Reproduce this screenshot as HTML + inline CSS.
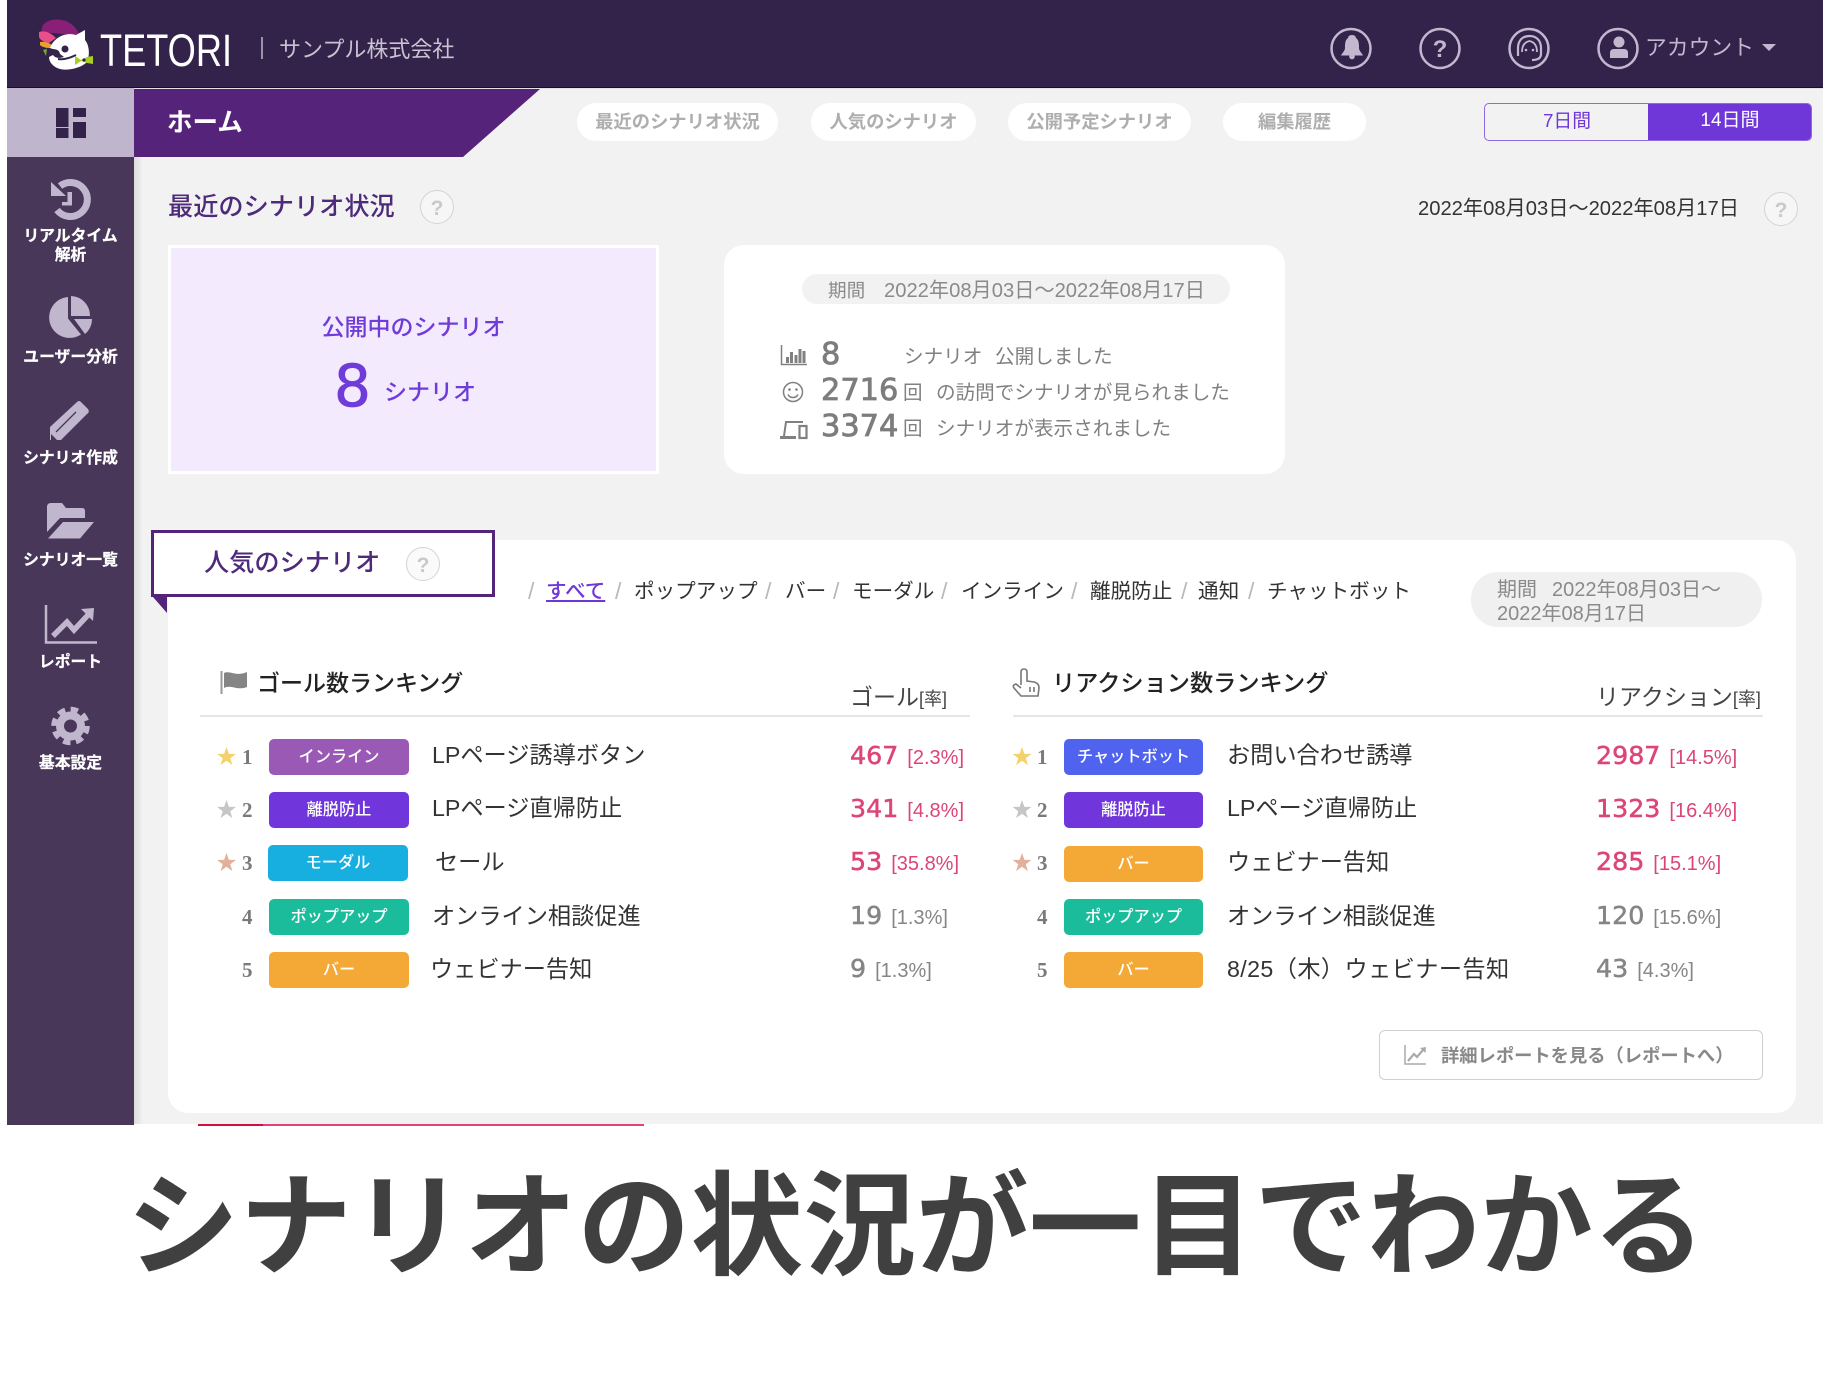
<!DOCTYPE html>
<html lang="ja">
<head>
<meta charset="utf-8">
<title>TETORI</title>
<style>
html,body{margin:0;padding:0;background:#fff}
body{width:1831px;height:1373px;position:relative;overflow:hidden;font-family:"Liberation Sans","Noto Sans CJK JP",sans-serif;color:#333}
.b{position:absolute}
.t{position:absolute;white-space:nowrap;line-height:40px;height:40px}
.c{text-align:center}
.nav{left:7px;width:127px;text-align:center;color:#fff;font-weight:700;font-size:15.8px;-webkit-text-stroke:.25px #fff}
.tab{position:absolute;top:103px;height:38px;line-height:37px;background:#fff;border-radius:19px;text-align:center;color:#aeaeae;font-weight:700;font-size:18.3px;white-space:nowrap}
.bd{position:absolute;width:140px;height:36px;line-height:37px;border-radius:5px;color:#fff;text-align:center;font-size:16.2px;font-weight:500}
.pu{background:#9b59b6}.vi{background:#7036dc}.cy{background:#17aee0}.gr{background:#1abc9c}.or{background:#f4a936}.bl{background:#4f63ee}
.nm{font-size:23.2px;color:#333}
.rk{font-family:"Liberation Serif",serif;font-weight:700;font-size:21px;color:#7a7a7a}
.n{font-family:"DejaVu Sans",sans-serif;font-size:25.3px;-webkit-text-stroke:.5px currentColor}
.n i{font-style:normal;font-family:"Liberation Sans",sans-serif;font-size:20px;-webkit-text-stroke:0;margin-left:9px}
.r{color:#dd4477}.g{color:#858585}
.fl{font-size:20.6px;color:#333}
.sl{font-size:23px;color:#b8b8b8}
.st{font-family:"DejaVu Sans",sans-serif;font-size:30.4px;color:#7d7d7d;-webkit-text-stroke:.8px #7d7d7d}
.sx{font-size:19.6px;color:#808080}
</style>
</head>
<body>
<!-- surfaces -->
<div class="b" style="left:7px;top:0;width:1816px;height:88px;background:#33234a;border-bottom:1px solid #191027;box-sizing:border-box"></div>
<div class="b" style="left:134px;top:88px;width:1689px;height:1036px;background:#f2f2f2"></div>
<div class="b" style="left:134px;top:88px;width:1689px;height:1px;background:#e3e0e6"></div>
<div class="b" style="left:7px;top:88px;width:127px;height:69px;background:#bfb6cd"></div>
<div class="b" style="left:7px;top:157px;width:127px;height:968px;background:#483758"></div>
<div class="b" style="left:134px;top:157px;width:9px;height:967px;background:linear-gradient(90deg,#dcdcdc,#f2f2f2)"></div>
<div class="b" style="left:134px;top:89px;width:406px;height:68px;background:#56237a;clip-path:polygon(0 0,100% 0,329px 100%,0 100%)"></div>

<div class="b" style="left:168px;top:245px;width:491px;height:229px;box-sizing:border-box;background:#f3eafe;border:3px solid #fff"></div>
<div class="b" style="left:724px;top:245px;width:561px;height:229px;background:#fff;border-radius:20px"></div>
<div class="b" style="left:802px;top:274px;width:428px;height:30px;background:#f2f2f2;border-radius:15px"></div>
<div class="b" style="left:168px;top:540px;width:1628px;height:573px;background:#fff;border-radius:20px"></div>
<div class="b" style="left:151px;top:530px;width:344px;height:67px;box-sizing:border-box;background:#fff;border:3px solid #54247a"></div>
<div class="b" style="left:1471px;top:572px;width:291px;height:55px;background:#f0f0f0;border-radius:27px"></div>
<div class="b" style="left:1484px;top:103px;width:328px;height:38px;box-sizing:border-box;border:1.5px solid #8f6adf;border-radius:5px;overflow:hidden"><div style="position:absolute;left:163px;top:0;right:0;bottom:0;background:#6f36d8"></div></div>
<div class="b" style="left:1379px;top:1030px;width:384px;height:50px;box-sizing:border-box;border:1.5px solid #cfcfcf;border-radius:6px;background:#fff"></div>
<div class="b" style="left:200px;top:715px;width:770px;height:2px;background:#e6e6e6"></div>
<div class="b" style="left:1013px;top:715px;width:750px;height:2px;background:#e6e6e6"></div>
<div class="b" style="left:198px;top:1124px;width:65px;height:2px;background:#d0103f"></div>
<div class="b" style="left:263px;top:1124px;width:381px;height:2px;background:#e8407f"></div>

<!-- icons -->
<svg class="b" style="left:0;top:0" width="1831" height="1373" viewBox="0 0 1831 1373">
<defs><polygon id="s" points="0,-10 2.4,-3.1 9.5,-3.1 3.8,1.2 5.9,8.1 0,3.8 -5.9,8.1 -3.8,1.2 -9.5,-3.1 -2.4,-3.1"/></defs>
<!-- logo -->
<path d="M42 31C40 21 55 17 66 21C73 24 78 30 79 35L62 34C55 33 47 33 42 31Z" fill="#8a1f78"/>
<path d="M39 32C45 30 51 33 56 38L49 43C44 42 40 40 39 37Z" fill="#e9508a"/>
<path d="M40 42C45 41 50 43 53 46L50 48C46 48 42 47 40 45Z" fill="#e8a030"/>
<path d="M43 50L47 49L46 56Z" fill="#6fae2c"/>
<path d="M50 48C54 37 66 32 76 35L85 30L85 40C90 46 90 58 86 63C80 68 68 71 60 69C53 67 49 62 49 57L53 55C56 59 60 58 64 57L60 54C59 48 54 50 50 48Z" fill="#fff"/>
<circle cx="65" cy="49" r="3.5" fill="#33234a"/>
<path d="M58 59C64 60 70 58 76 55" stroke="#33234a" stroke-width="2" fill="none"/>
<path d="M75 56L81 60L87 57L93 56L93 64L87 63L81 61L75 65Z" fill="#a8d020"/>
<circle cx="84" cy="60" r="1.6" fill="#33234a"/>
<rect x="261" y="37" width="2" height="22" fill="#9a92a5"/>
<!-- dashboard -->
<g fill="#33234a"><rect x="56" y="108" width="12.5" height="19"/><rect x="73" y="108" width="13" height="9"/><rect x="56" y="128" width="12.5" height="10"/><rect x="73" y="122" width="13" height="16"/></g>
<!-- sidebar icons -->
<g fill="#c0b6ce">
<path d="M60 186A17 17 0 1 1 57 210" fill="none" stroke="#c0b6ce" stroke-width="7"/>
<polygon points="51,182 51,196 66,196"/>
<path d="M67.500 192H72V205.500H62V202H67.500Z"/>
<path d="M68 297A20.500 20.500 0 1 0 81 334.500L68 318.500Z"/>
<path d="M71 296A19.500 19.500 0 0 1 90 316H71Z"/>
<path d="M74 319H92A20 20 0 0 1 85 334Z"/>
<path d="M50 440V427L77 402Q79 400 81 402L88 409Q90 412 87 414L61 440Z"/>
<path d="M56 432L76 412" stroke="#483758" stroke-width="1.300" fill="none"/>
<path d="M51 440V434L57 440Z" fill="#483758"/>
<path d="M47 507Q47 503 51 503H62L66 508H82Q85 508 85 511V518H60L47 532Z"/>
<path d="M48 538.500L63 522H94L80 538.500Z"/>
<path d="M46 605V642.500H97" fill="none" stroke="#c0b6ce" stroke-width="2.500"/>
<path d="M53 636L67 622L74 630L88 615" fill="none" stroke="#c0b6ce" stroke-width="5.500"/>
<polygon points="81,609 94,608 93,621"/>
<circle cx="70.500" cy="726" r="14.500"/>
<circle cx="70.500" cy="726" r="16" fill="none" stroke="#c0b6ce" stroke-width="6.500" stroke-dasharray="7.200 5.370"/>
<circle cx="70.500" cy="726" r="6.500" fill="#483758"/>
</g>
<!-- header icons -->
<g fill="none" stroke="#c3b7cf" stroke-width="2.500">
<circle cx="1351" cy="48.500" r="19.500"/><circle cx="1440" cy="48.500" r="19.500"/><circle cx="1529" cy="48.500" r="19.500"/><circle cx="1618" cy="48.500" r="19.500"/>
<path d="M1518 56V48C1518 40 1523 36 1529.500 36C1536 36 1541 40 1541 48V54C1541 58 1538 60 1532 60" stroke-width="2.200"/>
<path d="M1522 52C1522 45 1525 42 1529.500 41C1534 42 1537 45 1537 52" stroke-width="1.800"/>
</g>
<g fill="#c3b7cf">
<path d="M1352 35C1355 35 1356 37 1356 38C1359 40 1359 44 1359 48C1359 51 1362 53 1363 55.500H1341C1342 53 1345 51 1345 48C1345 44 1345 40 1348 38C1348 37 1349 35 1352 35Z"/>
<circle cx="1352" cy="56.500" r="2.800"/>
<text x="1440" y="57" text-anchor="middle" font-family="Liberation Sans" font-weight="700" font-size="24">?</text>
<circle cx="1526" cy="50" r="1.300"/><circle cx="1533" cy="50" r="1.300"/>
<circle cx="1619" cy="42" r="5.500"/>
<path d="M1610 53Q1610 49 1614 49H1624Q1628 49 1628 53V58H1610Z"/>
<polygon points="1762,44 1776,44 1769,51"/>
</g>
<!-- help circles -->
<g font-family="Liberation Sans" font-weight="700" font-size="21" fill="#c9c9c9" text-anchor="middle">
<circle cx="437" cy="207" r="16.500" fill="#f6f6f6" stroke="#d4d4d4"/><text x="437" y="215">?</text>
<circle cx="1781" cy="209" r="16.500" fill="#f6f6f6" stroke="#d4d4d4"/><text x="1781" y="217">?</text>
<circle cx="423" cy="564" r="16.500" fill="#fafafa" stroke="#d4d4d4"/><text x="423" y="572">?</text>
</g>
<polygon points="153,597 167,597 167,613" fill="#54247a"/>
<!-- stat icons -->
<g fill="#808080">
<path d="M781.500 345V364.500H807" fill="none" stroke="#808080" stroke-width="1.500"/>
<rect x="786" y="357" width="3" height="6"/><rect x="790" y="352" width="3" height="11"/><rect x="794.500" y="355" width="3" height="8"/><rect x="798.500" y="349" width="3" height="14"/><rect x="802.500" y="351" width="3" height="12"/>
<circle cx="793" cy="392" r="9.500" fill="none" stroke="#808080" stroke-width="1.500"/>
<circle cx="789.500" cy="389.500" r="1.300"/><circle cx="796.500" cy="389.500" r="1.300"/>
<path d="M788 394.500C790 398.500 796 398.500 798 394.500" fill="none" stroke="#808080" stroke-width="1.500"/>
<path d="M784 436L786 422H803" fill="none" stroke="#808080" stroke-width="2"/>
<rect x="780" y="436" width="16" height="3"/>
<rect x="799.500" y="426" width="7" height="12" fill="none" stroke="#808080" stroke-width="2.200"/>
</g>
<!-- ranking icons -->
<rect x="220.500" y="671" width="2" height="23" fill="#9a9a9a"/>
<path d="M224 673C230 670 236 677 247 672V687C237 691 231 684 224 688Z" fill="#858585"/>
<path d="M1021 685V672Q1021 669 1024 669Q1027 669 1027 672V681L1034 682Q1039 683 1039 688L1038 696H1021L1014 688Q1012 685 1016 684L1021 688M1030 687V692M1034 687V692" fill="none" stroke="#777" stroke-width="1.600"/>
<use href="#s" transform="translate(226.500,757)" fill="#f4d26b"/>
<use href="#s" transform="translate(226.500,810)" fill="#c6c6c6"/>
<use href="#s" transform="translate(226.500,863)" fill="#e3b09c"/>
<use href="#s" transform="translate(1022,757)" fill="#f4d26b"/>
<use href="#s" transform="translate(1022,810)" fill="#c6c6c6"/>
<use href="#s" transform="translate(1022,863)" fill="#e3b09c"/>
<path d="M1405 1045V1064H1426" fill="none" stroke="#aaa" stroke-width="1.500"/>
<path d="M1408 1061L1414 1054L1417 1057L1423 1050" fill="none" stroke="#aaa" stroke-width="2.200"/>
<polygon points="1420,1048 1426,1047 1425.500,1053" fill="#aaa"/>
</svg>

<!-- header -->
<svg class="b" style="left:98px;top:28px" width="136" height="42"><text x="2" y="38" textLength="132" lengthAdjust="spacingAndGlyphs" font-family="Liberation Sans" font-size="45" fill="#fff">TETORI</text></svg>
<div class="t" style="left:279px;top:30px;font-size:22px;color:#c9c2d2">サンプル株式会社</div>
<div class="t" style="left:1645px;top:28px;font-size:21.8px;color:#c3b7cf">アカウント</div>

<!-- sidebar -->
<div class="t nav" style="top:217px">リアルタイム</div>
<div class="t nav" style="top:236px">解析</div>
<div class="t nav" style="top:338px">ユーザー分析</div>
<div class="t nav" style="top:439px">シナリオ作成</div>
<div class="t nav" style="top:541px">シナリオ一覧</div>
<div class="t nav" style="top:643px">レポート</div>
<div class="t nav" style="top:744px">基本設定</div>

<!-- nav row -->
<div class="t" style="left:167px;top:103px;font-size:25.5px;font-weight:700;color:#fff">ホーム</div>
<div class="tab" style="left:577px;width:201px">最近のシナリオ状況</div>
<div class="tab" style="left:811px;width:165px">人気のシナリオ</div>
<div class="tab" style="left:1008px;width:183px">公開予定シナリオ</div>
<div class="tab" style="left:1223px;width:143px">編集履歴</div>
<div class="t c" style="left:1485px;width:164px;top:101px;font-size:18.8px;color:#6f36d8">7日間</div>
<div class="t c" style="left:1648px;width:164px;top:101px;font-size:19px;color:#fff">14日間</div>

<!-- recent -->
<div class="t" style="left:168px;top:187px;font-size:25.2px;font-weight:500;color:#4d2a7a">最近のシナリオ状況</div>
<div class="t" style="left:1418px;top:189px;font-size:20.2px;color:#333">2022年08月03日～2022年08月17日</div>
<div class="t c" style="left:168px;width:491px;top:307px;font-size:23px;font-weight:500;color:#6f3bd9">公開中のシナリオ</div>
<div class="t" style="left:334px;top:366px;font-family:'DejaVu Sans',sans-serif;font-size:58px;-webkit-text-stroke:.8px #6f3bd9;color:#6f3bd9">8</div>
<div class="t" style="left:384px;top:372px;font-size:23px;font-weight:500;color:#6f3bd9">シナリオ</div>
<div class="t" style="left:828px;top:271px;font-size:18.6px;color:#8a8a8a">期間</div>
<div class="t" style="left:884px;top:271px;font-size:20.2px;color:#8a8a8a">2022年08月03日～2022年08月17日</div>
<div class="t st" style="left:821px;top:335px">8</div>
<div class="t st" style="left:821px;top:371px">2716</div>
<div class="t st" style="left:821px;top:407px">3374</div>
<div class="t sx" style="left:904px;top:337px">シナリオ</div>
<div class="t sx" style="left:995px;top:337px">公開しました</div>
<div class="t" style="left:903px;top:373px;font-size:19.5px;color:#808080">回</div>
<div class="t sx" style="left:936px;top:373px">の訪問でシナリオが見られました</div>
<div class="t" style="left:903px;top:409px;font-size:19.5px;color:#808080">回</div>
<div class="t sx" style="left:936px;top:409px">シナリオが表示されました</div>

<!-- popular -->
<div class="t" style="left:204px;top:543px;font-size:25.2px;font-weight:500;color:#4d2a7a">人気のシナリオ</div>
<div class="t sl" style="left:528px;top:571px">/</div>
<div class="t fl" style="left:546px;top:572px;color:#6f36d8;text-decoration:underline;font-size:20.5px;font-weight:500">すべて</div>
<div class="t sl" style="left:615px;top:571px">/</div>
<div class="t fl" style="left:634px;top:572px">ポップアップ</div>
<div class="t sl" style="left:765px;top:571px">/</div>
<div class="t fl" style="left:785px;top:572px">バー</div>
<div class="t sl" style="left:833px;top:571px">/</div>
<div class="t fl" style="left:852px;top:572px">モーダル</div>
<div class="t sl" style="left:941px;top:571px">/</div>
<div class="t fl" style="left:961px;top:572px">インライン</div>
<div class="t sl" style="left:1071px;top:571px">/</div>
<div class="t fl" style="left:1090px;top:572px">離脱防止</div>
<div class="t sl" style="left:1181px;top:571px">/</div>
<div class="t fl" style="left:1198px;top:572px">通知</div>
<div class="t sl" style="left:1248px;top:571px">/</div>
<div class="t fl" style="left:1267px;top:572px">チャットボット</div>
<div class="t" style="left:1497px;top:570px;font-size:20px;color:#8a8a8a">期間</div>
<div class="t" style="left:1552px;top:570px;font-size:20px;color:#8a8a8a">2022年08月03日～</div>
<div class="t" style="left:1497px;top:594px;font-size:20px;color:#8a8a8a">2022年08月17日</div>

<!-- left ranking -->
<div class="t" style="left:257px;top:663px;font-size:23px;font-weight:500;color:#222">ゴール数ランキング</div>
<div class="t" style="left:850px;top:677px;font-size:23px;color:#444">ゴール<span style="font-size:18px">[率]</span></div>

<div class="t rk" style="left:242px;top:737px">1</div><div class="bd pu" style="left:269px;top:739px">インライン</div><div class="t nm" style="left:432px;top:735px">LPページ誘導ボタン</div><div class="t n r" style="left:850px;top:736px">467<i>[2.3%]</i></div>
<div class="t rk" style="left:242px;top:790px">2</div><div class="bd vi" style="left:269px;top:792px">離脱防止</div><div class="t nm" style="left:432px;top:788px">LPページ直帰防止</div><div class="t n r" style="left:850px;top:789px">341<i>[4.8%]</i></div>
<div class="t rk" style="left:242px;top:843px">3</div><div class="bd cy" style="left:268px;top:845px">モーダル</div><div class="t nm" style="left:435px;top:842px">セール</div><div class="t n r" style="left:850px;top:842px">53<i>[35.8%]</i></div>
<div class="t rk" style="left:242px;top:897px">4</div><div class="bd gr" style="left:269px;top:899px">ポップアップ</div><div class="t nm" style="left:432px;top:896px">オンライン相談促進</div><div class="t n g" style="left:850px;top:896px">19<i>[1.3%]</i></div>
<div class="t rk" style="left:242px;top:950px">5</div><div class="bd or" style="left:269px;top:952px">バー</div><div class="t nm" style="left:430px;top:949px">ウェビナー告知</div><div class="t n g" style="left:850px;top:949px">9<i>[1.3%]</i></div>

<!-- right ranking -->
<div class="t" style="left:1052px;top:663px;font-size:23.2px;font-weight:500;color:#222">リアクション数ランキング</div>
<div class="t" style="left:1596px;top:677px;font-size:23px;color:#444">リアクション<span style="font-size:18px">[率]</span></div>

<div class="t rk" style="left:1037px;top:737px">1</div><div class="bd bl" style="left:1064px;top:739px;width:139px">チャットボット</div><div class="t nm" style="left:1227px;top:735px">お問い合わせ誘導</div><div class="t n r" style="left:1596px;top:736px">2987<i>[14.5%]</i></div>
<div class="t rk" style="left:1037px;top:790px">2</div><div class="bd vi" style="left:1064px;top:792px;width:139px">離脱防止</div><div class="t nm" style="left:1227px;top:788px">LPページ直帰防止</div><div class="t n r" style="left:1596px;top:789px">1323<i>[16.4%]</i></div>
<div class="t rk" style="left:1037px;top:843px">3</div><div class="bd or" style="left:1064px;top:846px;width:139px">バー</div><div class="t nm" style="left:1227px;top:842px">ウェビナー告知</div><div class="t n r" style="left:1596px;top:842px">285<i>[15.1%]</i></div>
<div class="t rk" style="left:1037px;top:897px">4</div><div class="bd gr" style="left:1064px;top:899px;width:139px">ポップアップ</div><div class="t nm" style="left:1227px;top:896px">オンライン相談促進</div><div class="t n g" style="left:1596px;top:896px">120<i>[15.6%]</i></div>
<div class="t rk" style="left:1037px;top:950px">5</div><div class="bd or" style="left:1064px;top:952px;width:139px">バー</div><div class="t nm" style="left:1227px;top:949px;letter-spacing:.4px">8/25（木）ウェビナー告知</div><div class="t n g" style="left:1596px;top:949px">43<i>[4.3%]</i></div>

<div class="t" style="left:1441px;top:1036px;font-size:18.3px;font-weight:700;color:#888">詳細レポートを見る（レポートへ）</div>

<!-- caption -->
<div class="b" style="left:0;width:1832px;top:1167px;height:120px;line-height:120px;text-align:center;white-space:nowrap;font-family:'Liberation Sans','Noto Sans CJK JP',sans-serif;font-weight:700;font-size:112.8px;color:#404040">シナリオの状況が一目でわかる</div>
</body>
</html>
